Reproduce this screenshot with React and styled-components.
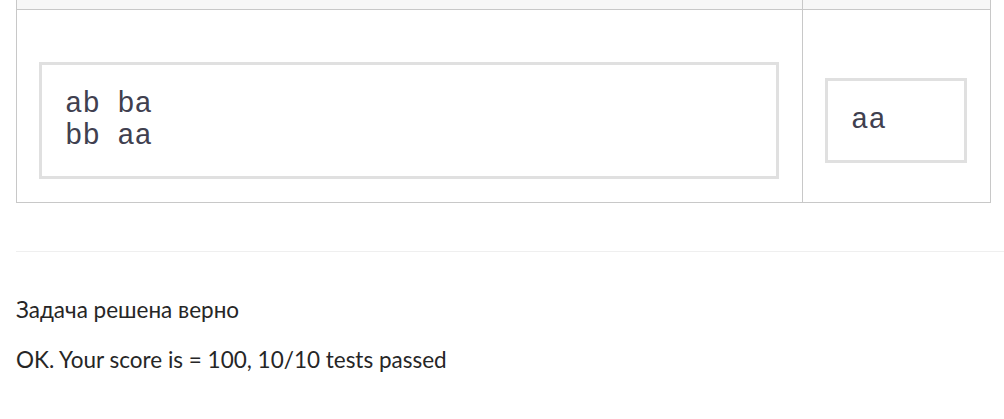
import React from 'react';
import styled, { createGlobalStyle } from 'styled-components';

const Global = createGlobalStyle`
  body {
    margin: 0;
    background: #fff;
    font-family: Lato, "Open Sans", sans-serif;
    color: #222;
  }
`;

const Page = styled.div`
  padding-left: 16px;
`;

const Table = styled.table`
  width: 975px;
  border-collapse: collapse;
  border: 1px solid #c8c8c8;
  border-top: none;
`;

const HeadCell = styled.th`
  height: 9px;
  padding: 0;
  background: #f7f7f7;
  border-bottom: 1px solid #c8c8c8;
  border-left: 1px solid #c8c8c8;
  &:first-child { border-left: none; }
`;

const Cell = styled.td`
  padding: 52px 23px 23px 22px;
  vertical-align: middle;
  border-left: 1px solid #c8c8c8;
  width: ${p => p.$w || 'auto'};
  &:first-child { border-left: none; }
`;

const Sample = styled.pre`
  margin: 0;
  box-sizing: border-box;
  width: ${p => p.$w || '100%'};
  border: 3px solid #e0e0e0;
  padding: 24px 22px 23px 23px;
  font-family: "Liberation Mono", "Courier New", monospace;
  font-size: 29px;
  line-height: 32px;
  color: #40404f;
`;

const Rule = styled.hr`
  margin: 48px 0 0;
  border: none;
  border-top: 1px solid #efefef;
`;

const Verdict = styled.p`
  margin: ${p => p.$top} 0 0;
  font-size: 22.5px;
  line-height: 30px;
  color: #262626;
`;

export default function App() {
  return (
    <Page>
      <Global />
      <Table>
        <thead>
          <tr>
            <HeadCell />
            <HeadCell />
          </tr>
        </thead>
        <tbody>
          <tr>
            <Cell>
              <Sample>{'ab ba\nbb aa'}</Sample>
            </Cell>
            <Cell $w="142px">
              <Sample $w="142px">aa</Sample>
            </Cell>
          </tr>
        </tbody>
      </Table>
      <Rule />
      <Verdict $top="43px">Задача решена верно</Verdict>
      <Verdict $top="20px">OK. Your score is = 100, 10/10 tests passed</Verdict>
    </Page>
  );
}
